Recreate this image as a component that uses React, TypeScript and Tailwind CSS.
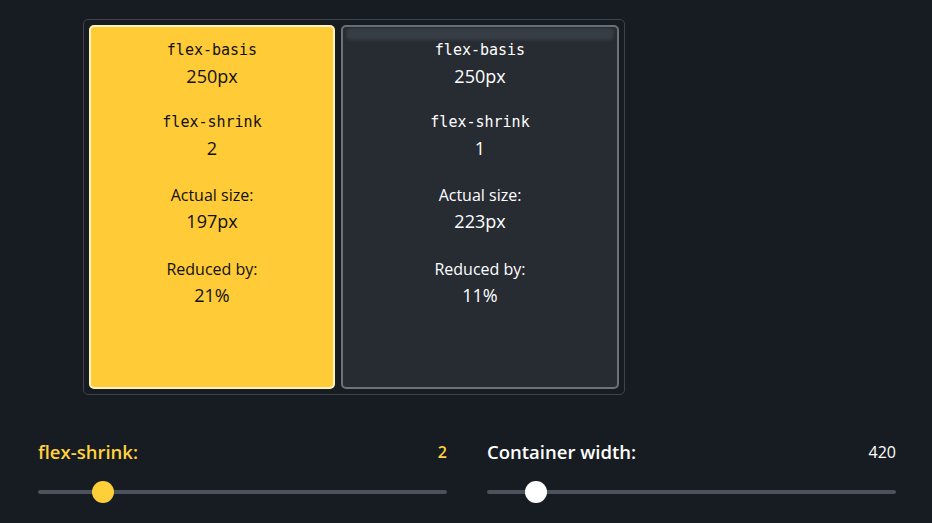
const items = [
  { basis: "250px", shrink: 2, actual: "197px", reduced: "21%", active: true },
  { basis: "250px", shrink: 1, actual: "223px", reduced: "11%", active: false },
];

function Stat({
  label,
  value,
  mono,
  className = "",
}: {
  label: string;
  value: string | number;
  mono?: boolean;
  className?: string;
}) {
  return (
    <div className={`flex flex-col items-center ${className}`}>
      <span
        className={
          mono
            ? "font-['DejaVu_Sans_Mono',monospace] text-[15px] leading-[26px]"
            : "text-[16px] leading-[26px]"
        }
      >
        {label}
      </span>
      <span className="text-[18px] leading-[26px]">{value}</span>
    </div>
  );
}

function Slider({
  label,
  value,
  pct,
  accent,
}: {
  label: string;
  value: string;
  pct: number;
  accent: boolean;
}) {
  return (
    <div className="flex flex-1 flex-col">
      <div className="flex items-center justify-between">
        <span
          className={`text-[18.5px] font-semibold ${accent ? "text-[#ffd23f]" : "text-white"}`}
        >
          {label}
        </span>
        <span className={`text-[16px] ${accent ? "text-[#ffd23f] font-semibold" : "text-white"}`}>
          {value}
        </span>
      </div>
      <div className="relative mt-[16px] h-[20px]">
        <div className="absolute left-0 right-0 top-[8px] h-[4px] rounded-full bg-[#4b525b]" />
        <div
          className={`absolute top-0 h-[22px] w-[22px] -translate-x-1/2 -translate-y-[1px] rounded-full ${
            accent ? "bg-[#ffcf3a]" : "bg-white"
          }`}
          style={{ left: `${pct}%` }}
        />
      </div>
    </div>
  );
}

export default function App() {
  return (
    <div className="min-h-[523px] w-[932px] bg-[#171c22] font-['Open_Sans',sans-serif] text-white">
      <div className="pl-[83px] pt-[19px]">
        <div className="flex w-[542px] gap-[6px] rounded-[5px] border border-[#3d444d] p-[5px]">
          {items.map((it, i) => (
            <div
              key={i}
              className={`relative flex h-[364px] flex-col rounded-[5px] border-2 pt-[10px] ${
                it.active
                  ? "w-[246px] border-[#fff2c2] bg-[#ffcb36] text-[#111]"
                  : "w-[278px] border-[#6a727c] bg-[#272c33] text-white"
              }`}
            >
              {!it.active && (
                <div className="absolute left-[3px] right-[3px] top-[1px] h-[12px] rounded-[5px] bg-[#373d45] blur-[1.5px]" />
              )}
              <div className="relative flex flex-col">
                <Stat label="flex-basis" value={it.basis} mono />
                <Stat label="flex-shrink" value={it.shrink} mono className="mt-[20px]" />
                <Stat label="Actual size:" value={it.actual} className="mt-[21px]" />
                <Stat label="Reduced by:" value={it.reduced} className="mt-[22px]" />
              </div>
            </div>
          ))}
        </div>
      </div>
      <div className="mt-[43px] flex gap-[40px] pl-[38px] pr-[36px]">
        <Slider label="flex-shrink:" value="2" pct={16} accent />
        <Slider label="Container width:" value="420" pct={12} accent={false} />
      </div>
    </div>
  );
}
